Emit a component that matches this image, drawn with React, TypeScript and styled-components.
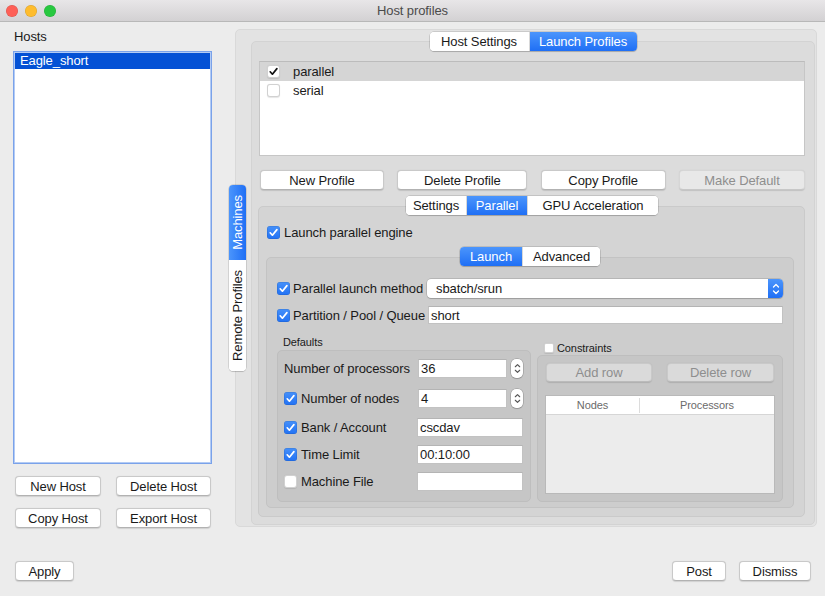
import React from 'react';
import styled, { createGlobalStyle } from 'styled-components';

const GlobalStyle = createGlobalStyle`
  html, body { margin: 0; padding: 0; background: #ececec; }
  body { font-family: "Liberation Sans", Arial, sans-serif; font-size: 13px; color: #1a1a1a; letter-spacing: -0.1px; }
  * { box-sizing: border-box; }
`;

const Window = styled.div`
  width: 825px;
  height: 596px;
  background: #ececec;
  display: flex;
  flex-direction: column;
  overflow: hidden;
`;

const TitleBar = styled.div`
  height: 22px;
  flex: none;
  display: grid;
  grid-template-columns: 1fr auto 1fr;
  align-items: center;
  background: linear-gradient(#e8e6e8, #d3d1d3);
  border-bottom: 1px solid #b8b8b8;
`;

const Lights = styled.div`
  display: flex;
  gap: 7px;
  padding-left: 6px;
`;

const Light = styled.span<{ $c: string }>`
  width: 12px;
  height: 12px;
  border-radius: 50%;
  background: ${p => p.$c};
  box-shadow: inset 0 0 0 0.5px rgba(0, 0, 0, 0.15);
`;

const Title = styled.div`
  color: #4b4b4b;
  font-size: 13px;
`;

const Body = styled.div`
  flex: 1;
  display: flex;
  flex-direction: column;
  min-height: 0;
`;

const Main = styled.div`
  display: flex;
  align-items: flex-start;
`;

const LeftCol = styled.div`
  width: 199px;
  margin-left: 13px;
  display: flex;
  flex-direction: column;
`;

const HostsLabel = styled.div`
  height: 29px;
  padding: 7px 0 0 1px;
  line-height: 16px;
`;

const HostList = styled.div`
  height: 413px;
  background: #fff;
  border: 1px solid #7aa2ea;
  padding: 1px;
  box-shadow: inset 0 0 0 1px #b3cbf4;
`;

const HostItem = styled.div<{ $selected?: boolean }>`
  height: 16px;
  line-height: 16px;
  padding-left: 5px;
  background: ${p => (p.$selected ? '#0451d5' : 'transparent')};
  color: ${p => (p.$selected ? '#fff' : '#1a1a1a')};
`;

const HostButtons = styled.div`
  margin: 12px 0 0 2px;
  display: grid;
  grid-template-columns: 86px 95px;
  column-gap: 15px;
  row-gap: 12px;
`;

const Button = styled.button<{ $w?: number; $off?: boolean; $h?: number }>`
  width: ${p => (p.$w ? `${p.$w}px` : 'auto')};
  height: ${p => p.$h ?? 20}px;
  padding: 0;
  font-family: inherit;
  font-size: 13px;
  letter-spacing: -0.1px;
  line-height: 1;
  color: ${p => (p.$off ? '#8e8e8e' : '#1a1a1a')};
  background: ${p => (p.$off ? 'rgba(255,255,255,0.35)' : '#fff')};
  border: 1px solid ${p => (p.$off ? 'rgba(0,0,0,0.08)' : '#c9c9c9')};
  border-bottom-color: ${p => (p.$off ? 'rgba(0,0,0,0.14)' : '#b2b2b2')};
  border-radius: 4px;
  box-shadow: 0 0.5px 1px rgba(0, 0, 0, 0.12);
`;

const OuterGroup = styled.div`
  position: relative;
  margin: 7px 0 0 23px;
  width: 582px;
  height: 498px;
  background: #e3e3e3;
  border: 1px solid #d9d9d9;
  border-radius: 5px;
  padding: 2px 1px 1px 15px;
`;

const SideTabs = styled.div`
  position: absolute;
  left: -7px;
  top: 50%;
  transform: translateY(-50%);
  width: 17px;
  display: flex;
  flex-direction: column;
  border-radius: 4px;
  overflow: hidden;
  background: #fff;
  box-shadow: 0 0 0 0.5px rgba(0, 0, 0, 0.2), 0 1px 1px rgba(0, 0, 0, 0.12);
`;

const SideTab = styled.div<{ $active?: boolean; $h: number }>`
  height: ${p => p.$h}px;
  display: flex;
  align-items: center;
  justify-content: center;
  color: ${p => (p.$active ? '#fff' : '#1a1a1a')};
  background: ${p => (p.$active ? 'linear-gradient(90deg, #4b95fc, #1f6ff5)' : '#fff')};
`;

const SideLabel = styled.span`
  writing-mode: vertical-rl;
  transform: rotate(180deg);
  white-space: nowrap;
  line-height: 17px;
`;

const TabWidget = styled.div<{ $mt?: number }>`
  display: flex;
  flex-direction: column;
  align-items: center;
  flex: 1;
  min-height: 0;
  height: 100%;
  margin-top: ${p => p.$mt ?? 0}px;
`;

const Segmented = styled.div<{ $overlap: number }>`
  flex: none;
  display: flex;
  height: 19px;
  margin-bottom: -${p => p.$overlap}px;
  position: relative;
  z-index: 1;
  border-radius: 4px;
  overflow: hidden;
  background: #fff;
  box-shadow: 0 0 0 0.5px rgba(0, 0, 0, 0.22), 0 1px 1px rgba(0, 0, 0, 0.14);
`;

const Segment = styled.div<{ $active?: boolean; $w: number }>`
  width: ${p => p.$w}px;
  display: flex;
  align-items: center;
  justify-content: center;
  white-space: nowrap;
  color: ${p => (p.$active ? '#fff' : '#1a1a1a')};
  background: ${p => (p.$active ? 'linear-gradient(#4b95fc, #1f6ff5)' : '#fff')};
  & + & {
    border-left: 1px solid #d8d8d8;
  }
`;

const Pane = styled.div<{ $bg: string; $bd: string; $pad: string; $ml?: number }>`
  align-self: stretch;
  flex: 1;
  min-height: 0;
  display: flex;
  flex-direction: column;
  background: ${p => p.$bg};
  border: 1px solid ${p => p.$bd};
  border-radius: 5px;
  padding: ${p => p.$pad};
  margin-left: ${p => p.$ml ?? 0}px;
`;

const ProfileList = styled.div`
  height: 95px;
  flex: none;
  background: #fff;
  border: 1px solid #c6c6c6;
  border-top-color: #bcbcbc;
`;

const ProfileRow = styled.div<{ $selected?: boolean }>`
  height: 19px;
  display: flex;
  align-items: center;
  padding-left: 7px;
  gap: 13px;
  background: ${p => (p.$selected ? '#d5d5d5' : '#fff')};
`;

const ProfileButtons = styled.div`
  flex: none;
  margin: 14px 0 0 1px;
  display: flex;
  justify-content: space-between;
`;

const Box = styled.span<{ $state: 'blue' | 'plain' | 'empty'; $size?: number }>`
  flex: none;
  width: ${p => p.$size ?? 13}px;
  height: ${p => p.$size ?? 13}px;
  border-radius: ${p => ((p.$size ?? 13) < 12 ? 2 : 3)}px;
  display: inline-flex;
  align-items: center;
  justify-content: center;
  background: ${p => (p.$state === 'blue' ? 'linear-gradient(#4590fa, #2272f4)' : '#fff')};
  box-shadow: ${p =>
    p.$state === 'blue'
      ? 'inset 0 0 0 0.5px rgba(0,0,0,0.15)'
      : 'inset 0 0 0 1px rgba(0,0,0,0.18), 0 0.5px 1px rgba(0,0,0,0.1)'};
`;

const Check = ({ state, size }: { state: 'blue' | 'plain' | 'empty'; size?: number }) => (
  <Box $state={state} $size={size}>
    {state !== 'empty' && (
      <svg width="11" height="11" viewBox="0 0 11 11">
        <path
          d="M2.2 5.8 L4.4 8.2 L8.9 2.6"
          fill="none"
          stroke={state === 'blue' ? '#fff' : '#111'}
          strokeWidth="1.7"
          strokeLinecap="round"
          strokeLinejoin="round"
        />
      </svg>
    )}
  </Box>
);

const CheckRow = styled.div`
  flex: none;
  height: 16px;
  margin-left: 1px;
  display: flex;
  align-items: center;
  gap: 4px;
`;

const MethodRow = styled.div<{ $h: number; $mt?: number }>`
  flex: none;
  height: ${p => p.$h}px;
  margin-top: ${p => p.$mt ?? 0}px;
  display: grid;
  grid-template-columns: 16px 134px 1fr;
  align-items: center;
`;

const MethodLabel = styled.span`
  white-space: nowrap;
`;

const Combo = styled.div`
  height: 19px;
  display: flex;
  align-items: center;
  background: #fff;
  border-radius: 4px;
  box-shadow: 0 0 0 0.5px rgba(0, 0, 0, 0.22), 0 1px 1px rgba(0, 0, 0, 0.14);
  overflow: hidden;
`;

const ComboText = styled.span`
  flex: 1;
  padding-left: 9px;
`;

const ComboArrow = styled.span`
  width: 15px;
  height: 100%;
  display: flex;
  align-items: center;
  justify-content: center;
  background: linear-gradient(#4b95fc, #1f6ff5);
`;

const TextField = styled.div<{ $w?: number; $h?: number; $ml?: number }>`
  width: ${p => (p.$w ? `${p.$w}px` : 'auto')};
  height: ${p => p.$h ?? 19}px;
  margin-left: ${p => p.$ml ?? 0}px;
  display: flex;
  align-items: center;
  padding-left: 2px;
  background: #fff;
  border: 1px solid #c2c2c2;
  border-top-color: #b4b4b4;
  white-space: nowrap;
`;

const GroupsRow = styled.div`
  flex: 1;
  min-height: 0;
  margin-top: 10px;
  display: grid;
  grid-template-columns: 254px 246px;
  column-gap: 6px;
`;

const GroupCol = styled.div`
  display: flex;
  flex-direction: column;
`;

const GroupTitle = styled.div`
  height: 16px;
  padding-left: 6px;
  font-size: 11px;
  line-height: 16px;
`;

const ConstraintsHeader = styled.div`
  height: 15px;
  margin-top: 6px;
  padding-left: 7px;
  display: flex;
  align-items: center;
  gap: 3px;
  font-size: 11px;
`;

const GroupBox = styled.div<{ $pad: string }>`
  flex: 1;
  display: flex;
  flex-direction: column;
  background: #c6c6c6;
  border: 1px solid #bebebe;
  border-radius: 5px;
  padding: ${p => p.$pad};
`;

const FormRow = styled.div<{ $mt: number }>`
  height: 19px;
  margin-top: ${p => p.$mt}px;
  display: grid;
  grid-template-columns: 133px auto auto;
  align-items: center;
`;

const FormLabel = styled.div`
  display: flex;
  align-items: center;
  gap: 4px;
  white-space: nowrap;
`;

const Spin = styled.span`
  margin-left: 4px;
  width: 12px;
  height: 19px;
  display: flex;
  align-items: center;
  justify-content: center;
  background: #fff;
  border-radius: 5px;
  box-shadow: 0 0 0 0.5px rgba(0, 0, 0, 0.25), 0 1px 1px rgba(0, 0, 0, 0.12);
`;

const ConstraintButtons = styled.div`
  display: flex;
  justify-content: space-between;
`;

const Table = styled.div`
  margin: 13px -1px 0;
  height: 99px;
  background: #ececec;
  border: 1px solid #b9b9b9;
  display: flex;
  flex-direction: column;
`;

const TableHead = styled.div`
  height: 19px;
  flex: none;
  display: grid;
  grid-template-columns: 93px 1fr;
  align-items: center;
  background: #fff;
  border-bottom: 1px solid #d6d6d6;
  font-size: 11px;
  color: #6b6b6b;
`;

const HeadCell = styled.div<{ $divider?: boolean }>`
  height: 15px;
  line-height: 15px;
  text-align: center;
  border-left: ${p => (p.$divider ? '1px solid #dcdcdc' : 'none')};
`;

const Footer = styled.div`
  margin-top: auto;
  padding: 0 14px 15px 15px;
  display: flex;
  justify-content: space-between;
  align-items: flex-end;
`;

const FooterRight = styled.div`
  display: flex;
  gap: 13px;
`;

const UpDown = ({ color, w, h }: { color: string; w: number; h: number }) => (
  <svg width={w} height={h} viewBox="0 0 8 14">
    <path d="M1.5 5 L4 2.5 L6.5 5 M1.5 9 L4 11.5 L6.5 9" fill="none" stroke={color} strokeWidth="1.3" strokeLinecap="round" strokeLinejoin="round" />
  </svg>
);

export default function App() {
  return (
    <>
      <GlobalStyle />
      <Window>
        <TitleBar>
          <Lights>
            <Light $c="#fe5f57" />
            <Light $c="#febc2e" />
            <Light $c="#28c840" />
          </Lights>
          <Title>Host profiles</Title>
          <span />
        </TitleBar>
        <Body>
          <Main>
            <LeftCol>
              <HostsLabel>Hosts</HostsLabel>
              <HostList>
                <HostItem $selected>Eagle_short</HostItem>
              </HostList>
              <HostButtons>
                <Button>New Host</Button>
                <Button>Delete Host</Button>
                <Button>Copy Host</Button>
                <Button>Export Host</Button>
              </HostButtons>
            </LeftCol>
            <OuterGroup>
              <SideTabs>
                <SideTab $active $h={75}>
                  <SideLabel>Machines</SideLabel>
                </SideTab>
                <SideTab $h={111}>
                  <SideLabel>Remote Profiles</SideLabel>
                </SideTab>
              </SideTabs>
              <TabWidget>
                <Segmented $overlap={10}>
                  <Segment $w={99}>Host Settings</Segment>
                  <Segment $w={108} $active>Launch Profiles</Segment>
                </Segmented>
                <Pane $bg="#dcdcdc" $bd="#d3d3d3" $pad="19px 9px 7px 7px">
                  <ProfileList>
                    <ProfileRow $selected>
                      <Check state="plain" />
                      <span>parallel</span>
                    </ProfileRow>
                    <ProfileRow>
                      <Check state="empty" />
                      <span>serial</span>
                    </ProfileRow>
                  </ProfileList>
                  <ProfileButtons>
                    <Button $w={124}>New Profile</Button>
                    <Button $w={130}>Delete Profile</Button>
                    <Button $w={125}>Copy Profile</Button>
                    <Button $w={126} $off>Make Default</Button>
                  </ProfileButtons>
                  <TabWidget $mt={6}>
                    <Segmented $overlap={9}>
                      <Segment $w={60}>Settings</Segment>
                      <Segment $w={61} $active>Parallel</Segment>
                      <Segment $w={131}>GPU Acceleration</Segment>
                    </Segmented>
                    <Pane $bg="#d4d4d4" $bd="#cacaca" $pad="17px 10px 8px 7px" $ml={-1}>
                      <CheckRow>
                        <Check state="blue" />
                        <span>Launch parallel engine</span>
                      </CheckRow>
                      <TabWidget $mt={7}>
                        <Segmented $overlap={9}>
                          <Segment $w={62} $active>Launch</Segment>
                          <Segment $w={78}>Advanced</Segment>
                        </Segmented>
                        <Pane $bg="#cdcdcd" $bd="#c3c3c3" $pad="21px 10px 7px 10px">
                          <MethodRow $h={19}>
                            <Check state="blue" />
                            <MethodLabel>Parallel launch method</MethodLabel>
                            <Combo>
                              <ComboText>sbatch/srun</ComboText>
                              <ComboArrow>
                                <UpDown color="#fff" w={8} h={14} />
                              </ComboArrow>
                            </Combo>
                          </MethodRow>
                          <MethodRow $h={18} $mt={8}>
                            <Check state="blue" />
                            <MethodLabel>Partition / Pool / Queue</MethodLabel>
                            <TextField $h={18} $ml={1}>short</TextField>
                          </MethodRow>
                          <GroupsRow>
                            <GroupCol>
                              <GroupTitle>Defaults</GroupTitle>
                              <GroupBox $pad="8px 7px 0 6px">
                                <FormRow $mt={0}>
                                  <FormLabel>Number of processors</FormLabel>
                                  <TextField $w={89} $ml={1}>36</TextField>
                                  <Spin>
                                    <UpDown color="#555" w={7} h={13} />
                                  </Spin>
                                </FormRow>
                                <FormRow $mt={11}>
                                  <FormLabel>
                                    <Check state="blue" />
                                    Number of nodes
                                  </FormLabel>
                                  <TextField $w={89} $ml={1}>4</TextField>
                                  <Spin>
                                    <UpDown color="#555" w={7} h={13} />
                                  </Spin>
                                </FormRow>
                                <FormRow $mt={10}>
                                  <FormLabel>
                                    <Check state="blue" />
                                    Bank / Account
                                  </FormLabel>
                                  <TextField $w={106}>cscdav</TextField>
                                </FormRow>
                                <FormRow $mt={8}>
                                  <FormLabel>
                                    <Check state="blue" />
                                    Time Limit
                                  </FormLabel>
                                  <TextField $w={106}>00:10:00</TextField>
                                </FormRow>
                                <FormRow $mt={8}>
                                  <FormLabel>
                                    <Check state="empty" />
                                    Machine File
                                  </FormLabel>
                                  <TextField $w={106} />
                                </FormRow>
                              </GroupBox>
                            </GroupCol>
                            <GroupCol>
                              <ConstraintsHeader>
                                <Check state="empty" size={10} />
                                <span>Constraints</span>
                              </ConstraintsHeader>
                              <GroupBox $pad="7px 8px 7px 8px">
                                <ConstraintButtons>
                                  <Button $w={106} $h={19} $off>Add row</Button>
                                  <Button $w={107} $h={19} $off>Delete row</Button>
                                </ConstraintButtons>
                                <Table>
                                  <TableHead>
                                    <HeadCell>Nodes</HeadCell>
                                    <HeadCell $divider>Processors</HeadCell>
                                  </TableHead>
                                </Table>
                              </GroupBox>
                            </GroupCol>
                          </GroupsRow>
                        </Pane>
                      </TabWidget>
                    </Pane>
                  </TabWidget>
                </Pane>
              </TabWidget>
            </OuterGroup>
          </Main>
          <Footer>
            <Button $w={59}>Apply</Button>
            <FooterRight>
              <Button $w={54}>Post</Button>
              <Button $w={72}>Dismiss</Button>
            </FooterRight>
          </Footer>
        </Body>
      </Window>
    </>
  );
}
